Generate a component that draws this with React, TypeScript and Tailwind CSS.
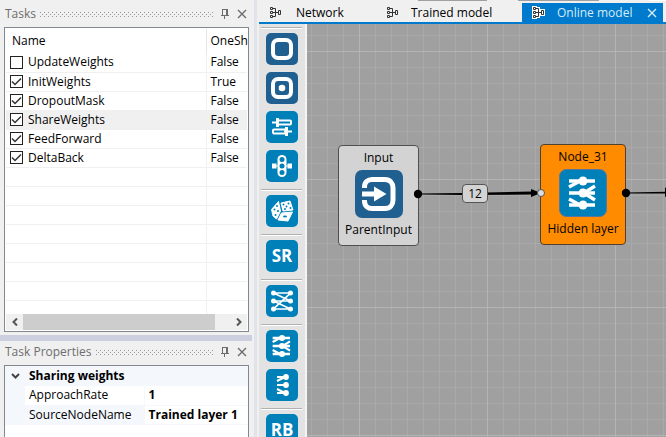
import React, { useState } from "react";

type Task = { name: string; enabled: boolean; oneShot: string };

const initialTasks: Task[] = [
  { name: "UpdateWeights", enabled: false, oneShot: "False" },
  { name: "InitWeights", enabled: true, oneShot: "True" },
  { name: "DropoutMask", enabled: true, oneShot: "False" },
  { name: "ShareWeights", enabled: true, oneShot: "False" },
  { name: "FeedForward", enabled: true, oneShot: "False" },
  { name: "DeltaBack", enabled: true, oneShot: "False" },
];

const emptyRows = [0, 1, 2, 3, 4, 5, 6];

function CloseIcon() {
  return (
    <svg width="10" height="10" viewBox="0 0 10 10" stroke="currentColor" strokeWidth="1.4" fill="none">
      <path d="M1 1 9 9M9 1 1 9" />
    </svg>
  );
}

function PinIcon() {
  return (
    <svg width="8" height="10" viewBox="0 0 8 10" fill="currentColor" shapeRendering="crispEdges">
      <path d="M1 0h6v1H1zM1 1h1v5H1zM5 1h2v5H5zM0 6h8v1H0zM3 7h1v3H3z" />
    </svg>
  );
}

function Grip({ id }: { id: string }) {
  return (
    <svg className="mr-2 ml-1 h-[5px] min-w-0 flex-1" shapeRendering="crispEdges" aria-hidden="true">
      <defs>
        <pattern id={id} width="4" height="4" patternUnits="userSpaceOnUse">
          <path d="M0 0h1v1H0zM2 2h1v1H2z" fill="#999" />
        </pattern>
      </defs>
      <rect width="100%" height="5" fill={`url(#${id})`} />
    </svg>
  );
}

function PanelHeader({ title, gripId }: { title: string; gripId: string }) {
  return (
    <header className="flex h-6 items-center pr-[5px] pb-[2px] pl-[5px] text-[#6d6d6d]">
      <h2>{title}</h2>
      <Grip id={gripId} />
      <button aria-label="Pin" className="mr-2">
        <PinIcon />
      </button>
      <button aria-label="Close">
        <CloseIcon />
      </button>
    </header>
  );
}

function TasksPanel() {
  const [tasks, setTasks] = useState(initialTasks);
  const toggle = (name: string) =>
    setTasks(tasks.map((t) => (t.name === name ? { ...t, enabled: !t.enabled } : t)));
  return (
    <section className="flex flex-col pt-[3px] pb-[3px]">
      <PanelHeader title="Tasks" gripId="grip-tasks" />
      <div className="mr-[3px] ml-1 border border-[#828790] bg-white p-px">
        <table className="w-full table-fixed border-collapse">
          <thead>
            <tr className="h-6 text-left">
              <th className="w-[200px] border-r border-[#e5e5e5] pl-[6px] font-normal">Name</th>
              <th className="p-0 pl-1 font-normal">OneSh</th>
            </tr>
          </thead>
          <tbody>
            {tasks.map((t) => (
              <tr
                key={t.name}
                className={
                  t.name === "ShareWeights"
                    ? "h-[19px] border-b border-[#f0f0f0] bg-[#f0f0f0]"
                    : "h-[19px] border-b border-[#f0f0f0]"
                }
              >
                <td className="border-r border-[#f0f0f0] p-0">
                  <label className="flex h-[18px] items-center pl-1">
                    <input
                      type="checkbox"
                      checked={t.enabled}
                      onChange={() => toggle(t.name)}
                      className="peer size-[13px] appearance-none border border-[#222] bg-white"
                    />
                    <svg
                      viewBox="0 0 13 13"
                      className="invisible -ml-[13px] size-[13px] peer-checked:visible"
                      fill="none"
                      stroke="#333"
                      strokeWidth="1.5"
                    >
                      <path d="M2 6.5 5 9.5 11 3.5" />
                    </svg>
                    <span className="ml-[5px]">{t.name}</span>
                  </label>
                </td>
                <td className="p-0 pl-1">{t.oneShot}</td>
              </tr>
            ))}
            {emptyRows.map((i) => (
              <tr key={i} className="h-[19px] border-b border-[#f0f0f0]">
                <td className="border-r border-[#f0f0f0] p-0" />
                <td className="p-0" />
              </tr>
            ))}
            <tr className="h-[14px]">
              <td className="border-r border-[#f0f0f0] p-0" />
              <td className="p-0" />
            </tr>
          </tbody>
        </table>
        <div className="flex h-4 items-stretch bg-[#f0f0f0]">
          <button aria-label="Scroll left" className="flex w-[17px] items-center justify-center">
            <svg width="6" height="8" viewBox="0 0 6 8" fill="none" stroke="#555" strokeWidth="2">
              <path d="M5 0.5 1.5 4 5 7.5" />
            </svg>
          </button>
          <div className="flex-1 bg-[#cdcdcd]" />
          <div className="w-[15px]" />
          <button aria-label="Scroll right" className="flex w-[17px] items-center justify-center">
            <svg width="6" height="8" viewBox="0 0 6 8" fill="none" stroke="#555" strokeWidth="2">
              <path d="M1 0.5 4.5 4 1 7.5" />
            </svg>
          </button>
        </div>
      </div>
    </section>
  );
}

function PropertiesPanel() {
  return (
    <section className="flex flex-1 flex-col">
      <PanelHeader title="Task Properties" gripId="grip-properties" />
      <div className="mr-[3px] ml-1 flex-1 border border-b-0 border-[#828790] bg-white">
        <div className="flex bg-[#f4f7fc]">
          <button aria-label="Collapse Sharing weights" className="flex h-5 w-5 items-center justify-center">
            <svg width="9" height="6" viewBox="0 0 9 6" fill="none" stroke="#444" strokeWidth="2">
              <path d="M1 1 4.5 4.5 8 1" />
            </svg>
          </button>
          <h3 className="pl-1 leading-5 font-bold">Sharing weights</h3>
        </div>
        <table className="w-full table-fixed border-collapse">
          <tbody>
            <tr className="h-[19px] border-b border-[#f4f7fc]">
              <td className="w-[20px] bg-[#f4f7fc] p-0" />
              <th className="w-[119px] border-r border-[#f4f7fc] p-0 pl-1 text-left font-normal">ApproachRate</th>
              <td className="p-0 pl-1 font-bold">1</td>
            </tr>
            <tr className="h-[19px] border-b border-[#f4f7fc]">
              <td className="bg-[#f4f7fc] p-0" />
              <th className="border-r border-[#f4f7fc] bg-[#f4f7fc] p-0 pl-1 text-left font-normal">SourceNodeName</th>
              <td className="p-0 pl-1 font-bold whitespace-nowrap">Trained layer 1</td>
            </tr>
          </tbody>
        </table>
      </div>
    </section>
  );
}

function ModelShape() {
  return (
    <>
      <path d="M4 2.5h2.500v8H4M4 6.500h5" />
      <path d="M1.500 1.500h2v2h-2zM1.500 5.500h2v2h-2zM1.500 9.500h2v2h-2zM9.500 4.500h2v4h-2z" />
    </>
  );
}

function ModelIcon({ light = false }: { light?: boolean }) {
  return (
    <svg width="13" height="13" viewBox="0 0 13 13" fill="none" className="shrink-0">
      {light && (
        <g stroke="#fff" strokeWidth="3">
          <ModelShape />
        </g>
      )}
      <g stroke="#333">
        <ModelShape />
      </g>
    </svg>
  );
}

function Tabs() {
  return (
    <>
      <div className="flex h-px justify-end">
        <div className="w-[69px] bg-[#a0a0a0]" />
        <div className="ml-[31px] w-[81px] bg-[#a0a0a0]" />
        <div className="ml-[50px] w-[17px] bg-white" />
      </div>
      <nav className="flex h-[23px] border-b-2 border-[#007acc] pr-[3px] pt-[2px]" role="tablist">
        <button role="tab" className="flex items-center pl-[10px]">
          <ModelIcon />
          <span className="w-[92px] pl-[14px] text-left">Network</span>
        </button>
        <button role="tab" className="flex items-center pl-3">
          <ModelIcon />
          <span className="pl-3">Trained model</span>
        </button>
        <div
          role="tab"
          aria-selected="true"
          className="ml-auto flex w-[141px] items-center bg-[#007acc] pr-[6px] pl-[10px] text-[#d5ebf8]"
        >
          <ModelIcon light />
          <span className="flex-1 pl-3 whitespace-nowrap">Online model</span>
          <button aria-label="Close Online model">
            <CloseIcon />
          </button>
        </div>
      </nav>
    </>
  );
}

function HiddenGlyph() {
  return (
    <g fill="none" stroke="#fff" strokeWidth="3.400">
      <path d="M10 12h26M10 24h26M10 36h26" />
      <path d="M10 18 21 12M25 24 36 17M25 24 36 31M10 30 21 36" />
      <g fill="#fff" stroke="none">
        <circle cx="24" cy="12" r="4.500" />
        <circle cx="24" cy="24" r="4.500" />
        <circle cx="24" cy="36" r="4.500" />
      </g>
    </g>
  );
}

function GlyphSquare() {
  return <rect x="7" y="7" width="18" height="18" rx="5" fill="none" stroke="#fff" strokeWidth="4" />;
}

function ToolButton({ label, dark = false, children }: { label: string; dark?: boolean; children: React.ReactNode }) {
  return (
    <button
      aria-label={label}
      className={
        dark
          ? "flex size-8 shrink-0 items-center justify-center rounded-[5px] bg-[#206090] text-white"
          : "flex size-8 shrink-0 items-center justify-center rounded-[5px] bg-[#0080b8] text-white"
      }
    >
      {children}
    </button>
  );
}

function Glyph({ children }: { children: React.ReactNode }) {
  return (
    <svg width="32" height="32" viewBox="0 0 32 32">
      {children}
    </svg>
  );
}

function ToolGroup({ children }: { children: React.ReactNode }) {
  return (
    <div className="flex flex-col">
      <div className="mr-[3px] ml-[2px] h-[2px] border-t border-b border-t-[#b0b0b0] border-b-white" />
      <div className="flex flex-col gap-[7px] pt-1 pb-[7px] pl-[7px]">{children}</div>
    </div>
  );
}

function Toolbar() {
  return (
    <aside className="w-12 shrink-0 overflow-hidden border-r-2 border-[#f4f4f4] bg-[#e3e3e3] pt-[3px]">
      <ToolGroup>
        <ToolButton label="Node group" dark>
          <Glyph>
            <GlyphSquare />
          </Glyph>
        </ToolButton>
        <ToolButton label="Device input" dark>
          <Glyph>
            <GlyphSquare />
            <circle cx="16" cy="16" r="3.3" fill="#fff" />
          </Glyph>
        </ToolButton>
        <ToolButton label="Fork and join">
          <Glyph>
            <g fill="none" stroke="#fff" strokeWidth="2">
              <path d="M6 11.500h5M18 20.500h8" />
              <rect x="12" y="9.500" width="13" height="4" rx="1" />
              <rect x="7" y="18.500" width="13" height="4" rx="1" />
            </g>
            <path d="M10 7h3v9h-3zM19 16h3v9h-3z" fill="#fff" />
          </Glyph>
        </ToolButton>
        <ToolButton label="Accumulator">
          <Glyph>
            <path d="M6 13.500h4.500v5H6zM21.500 13.500H26v5h-4.500zM10 15.500h12v1H10z" fill="#fff" />
            <rect x="11.500" y="5" width="9" height="22" rx="4.500" fill="#fff" />
            <g fill="#0080b8">
              <circle cx="16" cy="9.500" r="2.500" />
              <circle cx="16" cy="16" r="2.500" />
              <circle cx="16" cy="22.500" r="2.500" />
            </g>
          </Glyph>
        </ToolButton>
      </ToolGroup>
      <ToolGroup>
        <ToolButton label="Random">
          <Glyph>
            <path
              d="M5.500 14.500 12.500 6.500 14.500 16 10.500 24 7 21ZM15 8 24 6 27 15 17 16ZM15.500 18 26.500 17 22 26 12 25Z"
              fill="#fff"
              stroke="#fff"
              strokeLinejoin="round"
            />
            <g fill="#0080b8">
              <circle cx="17.500" cy="9.500" r="1" />
              <circle cx="22.500" cy="8.500" r="1" />
              <circle cx="20.500" cy="11.500" r="1" />
              <circle cx="19" cy="14" r="1" />
              <circle cx="24.500" cy="13" r="1" />
              <circle cx="11" cy="11" r="1" />
              <circle cx="8.500" cy="14.500" r="1" />
              <circle cx="12" cy="16" r="1" />
              <circle cx="9.500" cy="20" r="1" />
              <ellipse cx="19" cy="21.500" rx="2" ry="1" />
            </g>
          </Glyph>
        </ToolButton>
      </ToolGroup>
      <ToolGroup>
        <ToolButton label="SR">
          <span className="font-['Open_Sans',sans-serif] text-[17px] leading-8 font-bold">SR</span>
        </ToolButton>
      </ToolGroup>
      <ToolGroup>
        <ToolButton label="Fully connected layer">
          <Glyph>
            <path
              d="M7.500 8H24.500L7.500 24H24.500M7.500 8 24.500 16H7.500M7.500 16 24.500 24"
              fill="none"
              stroke="#fff"
              strokeWidth="1.700"
            />
            <g fill="#fff">
              <circle cx="7.500" cy="8" r="2.500" />
              <circle cx="7.500" cy="16" r="2.500" />
              <circle cx="7.500" cy="24" r="2.500" />
              <circle cx="24.500" cy="8" r="2.500" />
              <circle cx="24.500" cy="16" r="2.500" />
              <circle cx="24.500" cy="24" r="2.500" />
            </g>
          </Glyph>
        </ToolButton>
      </ToolGroup>
      <ToolGroup>
        <ToolButton label="Hidden layer">
          <svg width="32" height="32" viewBox="0 0 48 48">
            <HiddenGlyph />
          </svg>
        </ToolButton>
        <ToolButton label="Output layer">
          <Glyph>
            <path d="M11 8h9M11 16h9M11 24h9M11 12l8-4M11 20l8 4" stroke="#fff" strokeWidth="2" fill="none" />
            <g fill="#fff">
              <circle cx="20" cy="8" r="2.900" />
              <circle cx="20" cy="16" r="2.900" />
              <circle cx="20" cy="24" r="2.900" />
            </g>
          </Glyph>
        </ToolButton>
      </ToolGroup>
      <ToolGroup>
        <ToolButton label="RB">
          <span className="font-['Open_Sans',sans-serif] text-[17px] leading-8 font-bold">RB</span>
        </ToolButton>
      </ToolGroup>
    </aside>
  );
}

function ModelCanvas() {
  return (
    <main className="relative flex-1 overflow-hidden bg-[#a0a0a0] bg-[linear-gradient(90deg,#b4b4b4_1px,transparent_1px),linear-gradient(#b4b4b4_1px,transparent_1px),linear-gradient(90deg,#a9a9a9_1px,transparent_1px),linear-gradient(#a9a9a9_1px,transparent_1px)] bg-[length:128px_128px,128px_128px,16px_16px,16px_16px] bg-[position:52px_27px,52px_27px,4px_11px,4px_11px]">
      <div className="absolute top-[121px] left-[31px] flex h-[101px] w-[81px] flex-col items-center gap-[3px] rounded-[4px] border border-[#505050] bg-[#d3d3d3] pt-[3px]">
        <span className="leading-[18px]">Input</span>
        <svg width="48" height="48" viewBox="0 0 48 48">
          <rect width="48" height="48" rx="7" fill="#206090" />
          <path
            d="M9.500 18V17C9.500 12 13 9.500 17 9.500H30C35 9.500 38 13 38 18V30C38 35 35 38.500 30 38.500H17C13 38.500 9.500 36 9.500 31V30"
            fill="none"
            stroke="#fff"
            strokeWidth="5"
          />
          <path d="M7 21.500h12v-5l12.500 7.500L19 31.500v-5H7z" fill="#fff" />
        </svg>
        <span className="leading-[18px]">ParentInput</span>
      </div>
      <div className="absolute top-[120px] left-[233px] flex h-[101px] w-[86px] flex-col items-center gap-[3px] rounded-[4px] border border-[#504030] bg-[#ff8c00] pt-[3px]">
        <span className="leading-[18px]">Node_31</span>
        <svg width="48" height="48" viewBox="0 0 48 48">
          <rect x="0.500" y="0.500" width="47" height="47" rx="7" fill="#0080b8" stroke="#5577a0" />
          <HiddenGlyph />
        </svg>
        <span className="leading-[18px] whitespace-nowrap">Hidden layer</span>
      </div>
      <svg className="absolute top-[158px] left-[107px]" width="260" height="24" viewBox="0 0 260 24">
        <path d="M8 11.500 48 11 118 9.500V12.500L48 13 8 12.500Z" fill="#000" />
        <path d="M117 7 127 11 117 15Z" fill="#000" />
        <path d="M212 10.500 260 9.500V11.500L212 11.500Z" fill="#000" />
        <path d="M251 5.500 260 10.500 251 15Z" fill="#000" />
        <circle cx="4" cy="12" r="4.200" fill="#000" />
        <circle cx="127" cy="11" r="3.500" fill="#ddd" stroke="#555" />
        <circle cx="212" cy="11" r="4.200" fill="#000" />
      </svg>
      <span className="absolute top-[160px] left-[155px] flex h-[19px] w-[26px] items-center justify-center rounded-[4px] border border-[#555] bg-[#d3d3d3]">
        12
      </span>
    </main>
  );
}

export default function App() {
  return (
    <div className="flex h-screen overflow-hidden bg-[#eeeef2] font-['Open_Sans','Noto_Sans',sans-serif] text-[12px] leading-4 text-black">
      <div className="flex w-[252px] shrink-0 flex-col bg-[#f0f0f0]">
        <TasksPanel />
        <div className="h-[6px] bg-[#ccd0de]" />
        <PropertiesPanel />
      </div>
      <div className="w-[7px] shrink-0 border-x-2 border-[#f0f0f0] bg-[#e2e3ea]" />
      <div className="flex min-w-0 flex-1 flex-col bg-[#f0f0f0]">
        <Tabs />
        <div className="flex min-h-0 flex-1">
          <Toolbar />
          <ModelCanvas />
        </div>
      </div>
    </div>
  );
}
